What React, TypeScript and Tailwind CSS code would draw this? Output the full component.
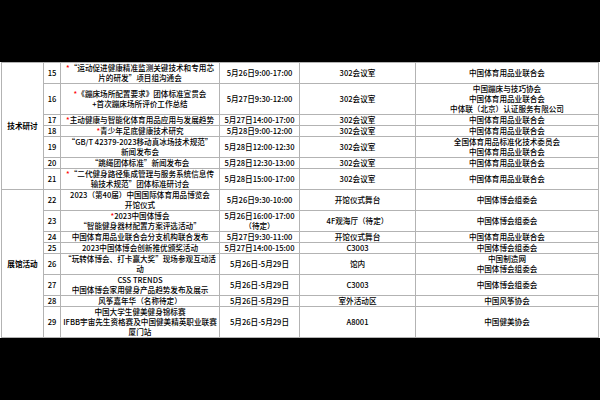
import React from "react";

type Row = {
  n: number;
  star?: boolean;
  title: string[];
  date: string[];
  place: string[];
  org: string[];
};

const rows: Row[] = [
  { n: 15, star: true, title: ["“运动促进健康精准监测关键技术和专用芯", "片的研发”项目组沟通会"], date: ["5月26日9:00-17:00"], place: ["302会议室"], org: ["中国体育用品业联合会"] },
  { n: 16, star: true, title: ["《蹦床场所配置要求》团体标准宣贯会", "+首次蹦床场所评价工作总结"], date: ["5月27日9:30-12:00"], place: ["302会议室"], org: ["中国蹦床与技巧协会", "中国体育用品业联合会", "中体联（北京）认证服务有限公司"] },
  { n: 17, star: true, title: ["主动健康与智能化体育用品应用与发展趋势"], date: ["5月27日14:00-17:00"], place: ["302会议室"], org: ["中国体育用品业联合会"] },
  { n: 18, star: true, title: ["青少年足底健康技术研究"], date: ["5月28日9:00-12:00"], place: ["302会议室"], org: ["中国体育用品业联合会"] },
  { n: 19, title: ["“GB/T 42379-2023移动真冰场技术规范”", "新闻发布会"], date: ["5月28日12:00-12:30"], place: ["302会议室"], org: ["全国体育用品标准化技术委员会", "中国体育用品业联合会"] },
  { n: 20, title: ["“跳绳团体标准”新闻发布会"], date: ["5月28日12:30-13:00"], place: ["302会议室"], org: ["中国体育用品业联合会"] },
  { n: 21, star: true, title: ["“二代健身路径集成管理与服务系统信息传", "输技术规范”团体标准研讨会"], date: ["5月28日15:00-17:00"], place: ["302会议室"], org: ["中国体育用品业联合会"] },
  { n: 22, title: ["2023（第40届）中国国际体育用品博览会", "开馆仪式"], date: ["5月26日9:30-10:00"], place: ["开馆仪式舞台"], org: ["中国体博会组委会"] },
  { n: 23, star: true, title: ["2023中国体博会", "“智能健身器材配置方案评选活动”"], date: ["5月26日16:00-17:00", "（待定）"], place: ["4F观海厅（待定）"], org: ["中国体博会组委会"] },
  { n: 24, title: ["中国体育用品业联合会分支机构联合发布"], date: ["5月27日9:30-11:00"], place: ["开馆仪式舞台"], org: ["中国体育用品业联合会"] },
  { n: 25, title: ["2023中国体博会创新推优颁奖活动"], date: ["5月27日14:00-15:00"], place: ["C3003"], org: ["中国体博会组委会"] },
  { n: 26, title: ["“玩转体博会、打卡赢大奖”现场参观互动活", "动"], date: ["5月26日-5月29日"], place: ["馆内"], org: ["中国制造网", "中国体博会组委会"] },
  { n: 27, title: ["CSS TRENDS", "中国体博会家用健身产品趋势发布及展示"], date: ["5月26日-5月29日"], place: ["C3003"], org: ["中国体博会组委会"] },
  { n: 28, title: ["风筝嘉年华（名称待定）"], date: ["5月26日-5月29日"], place: ["室外活动区"], org: ["中国风筝协会"] },
  { n: 29, title: ["中国大学生健美健身锦标赛", "IFBB宇宙先生资格赛及中国健美精英职业联赛", "厦门站"], date: ["5月26日-5月29日"], place: ["A8001"], org: ["中国健美协会"] },
];

const cell = "border border-[#b3b3b3] p-0 text-center align-middle whitespace-nowrap";

function Lines({ lines, star }: { lines: string[]; star?: boolean }) {
  return (
    <>
      {lines.map((l, i) => (
        <div key={i}>
          {i === 0 && star ? <span className="text-[#ff0000]">*</span> : null}
          {l}
        </div>
      ))}
    </>
  );
}

export default function App() {
  return (
    <div
      className="w-[600px] h-[400px] bg-black pt-[62px] overflow-hidden"
      style={{ fontFamily: '"Noto Sans CJK SC", "Noto Sans", sans-serif' }}
    >
      <div className="bg-white pl-[1px] pr-[2px]">
        <table className="table-fixed border-collapse w-[597px] text-[7.6px] leading-[10px] text-black font-medium">
          <colgroup>
            <col className="w-[42px]" />
            <col className="w-[17px]" />
            <col className="w-[159px]" />
            <col className="w-[80px]" />
            <col className="w-[116px]" />
            <col className="w-[183px]" />
          </colgroup>
          <tbody>
            {rows.map((r, idx) => (
              <tr key={r.n}>
                {idx === 0 && (
                  <td rowSpan={7} className={cell + " font-bold"}>技术研讨</td>
                )}
                {idx === 7 && (
                  <td rowSpan={8} className={cell + " font-bold"}>展馆活动</td>
                )}
                <td className={cell}>{r.n}</td>
                <td className={cell}>
                  <Lines lines={r.title} star={r.star} />
                </td>
                <td className={cell}>
                  <Lines lines={r.date} />
                </td>
                <td className={cell}>
                  <Lines lines={r.place} />
                </td>
                <td className={cell}>
                  <Lines lines={r.org} />
                </td>
              </tr>
            ))}
          </tbody>
        </table>
      </div>
    </div>
  );
}
